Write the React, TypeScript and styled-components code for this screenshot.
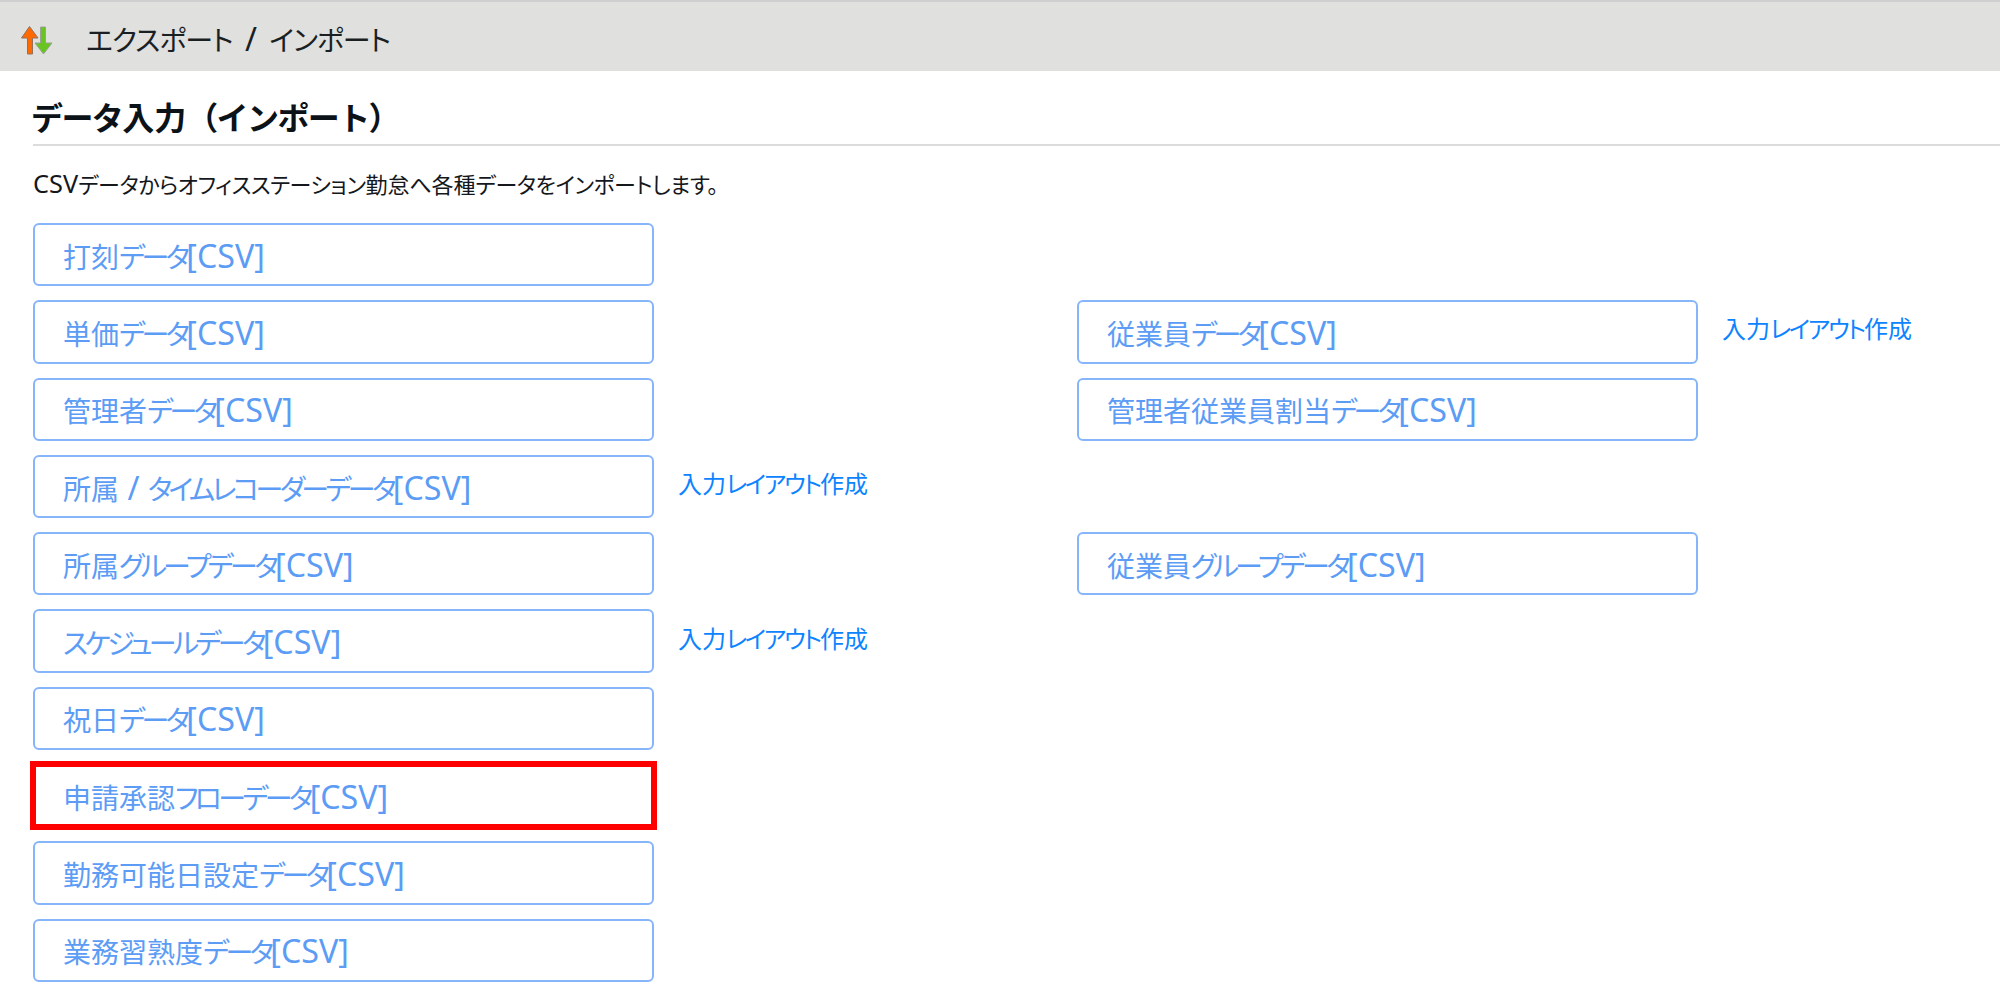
import React from 'react';
import styled, { createGlobalStyle } from 'styled-components';

const GlobalStyle = createGlobalStyle`
  html, body {
    margin: 0;
    padding: 0;
    background: #fff;
    font-family: "Noto Sans CJK JP", "Noto Sans", sans-serif;
    font-feature-settings: "palt";
  }
`;

const Page = styled.div`
  width: 2000px;
  height: 994px;
  overflow: hidden;
`;

const Header = styled.header`
  display: flex;
  align-items: center;
  height: 69px;
  padding-left: 21px;
  background: #e0e0de;
  border-top: 2px solid #cfcfcf;
`;

const HeaderIcon = styled.svg`
  flex: none;
  margin-top: 8px;
`;

const HeaderTitle = styled.h1`
  --kana-spacing: -0.035em;
  margin: 4px 0 0 33px;
  font-size: 28px;
  font-weight: 400;
  color: #1a1f24;
  word-spacing: 4px;
`;

const Content = styled.main`
  padding: 22px 0 0 33px;
`;

const SectionTitle = styled.h2`
  --kana-spacing: -0.05em;
  margin: 0;
  height: 51px;
  line-height: 46px;
  font-size: 32px;
  font-weight: 700;
  font-feature-settings: normal;
  text-indent: -2px;
  color: #0b1218;
  border-bottom: 2px solid #dcdcdc;
`;

const Lead = styled.p`
  --kana-spacing: -0.02em;
  margin: 21px 0 0;
  height: 33px;
  line-height: 33px;
  font-size: 22px;
  color: #14181c;
`;

const ImportGrid = styled.div`
  display: grid;
  grid-template-columns: 621px 423px 621px auto;
  grid-auto-rows: 63.3px;
  row-gap: 14px;
  margin-top: 23px;
`;

const ImportButton = styled.a<{ $column: 1 | 3; $row: number; $highlighted?: boolean }>`
  --kana-spacing: -0.13em;
  position: relative;
  grid-column: ${(p) => p.$column};
  grid-row: ${(p) => p.$row};
  display: flex;
  align-items: center;
  box-sizing: border-box;
  padding: 1px 0 0 28px;
  font-size: 28px;
  color: #5c9cf5;
  border: 2px solid #86b5f9;
  border-radius: 6px;
  white-space: pre;

  ${(p) =>
    p.$highlighted &&
    `
    &::after {
      content: "";
      position: absolute;
      inset: -5px;
      border: 6px solid #ff0000;
    }
  `}
`;

const LayoutLink = styled.a<{ $column: 2 | 4; $row: number }>`
  --kana-spacing: -0.09em;
  grid-column: ${(p) => p.$column};
  grid-row: ${(p) => p.$row};
  align-self: center;
  margin: 0 0 8px 24px;
  font-size: 24px;
  color: #0d84ff;
`;

// Kana in the original font is much narrower than the kanji
const Kana = styled.span`
  letter-spacing: var(--kana-spacing, -0.1em);
`;

const Latin = styled.span`
  font-family: "Noto Sans", sans-serif;
  font-size: 1.15em;
`;

const Mixed: React.FC<{ text: string }> = ({ text }) => (
  <>
    {text.split(/([\u3040-\u30ff\uff08\uff09。]+|[\x20-\x7e]+)/).map((part, i) => {
      if (!part) return null;
      if (/^[\x20-\x7e]/.test(part)) return <Latin key={i}>{part}</Latin>;
      if (/^[\u3040-\u30ff\uff08\uff09。]/.test(part)) return <Kana key={i}>{part}</Kana>;
      return <span key={i}>{part}</span>;
    })}
  </>
);

const ArrowsIcon = () => (
  <HeaderIcon width="32" height="29" viewBox="0 0 32 29" aria-hidden="true">
    <path d="M19.5 1h5v16H31l-8.5 11L14 17h5.5z" fill="#68c41e" stroke="#9aa394" strokeWidth="1" />
    <path d="M8.5 .5L17 12h-5.5v16h-5V12H.5z" fill="#ff6a00" stroke="#94705a" strokeWidth="1" />
  </HeaderIcon>
);

const buttons: { label: string; column: 1 | 3; row: number; highlighted?: boolean }[] = [
  { label: '打刻データ[CSV]', column: 1, row: 1 },
  { label: '単価データ[CSV]', column: 1, row: 2 },
  { label: '従業員データ[CSV]', column: 3, row: 2 },
  { label: '管理者データ[CSV]', column: 1, row: 3 },
  { label: '管理者従業員割当データ[CSV]', column: 3, row: 3 },
  { label: '所属 / タイムレコーダーデータ[CSV]', column: 1, row: 4 },
  { label: '所属グループデータ[CSV]', column: 1, row: 5 },
  { label: '従業員グループデータ[CSV]', column: 3, row: 5 },
  { label: 'スケジュールデータ[CSV]', column: 1, row: 6 },
  { label: '祝日データ[CSV]', column: 1, row: 7 },
  { label: '申請承認フローデータ[CSV]', column: 1, row: 8, highlighted: true },
  { label: '勤務可能日設定データ[CSV]', column: 1, row: 9 },
  { label: '業務習熟度データ[CSV]', column: 1, row: 10 },
];

const links: { column: 2 | 4; row: number }[] = [
  { column: 4, row: 2 },
  { column: 2, row: 4 },
  { column: 2, row: 6 },
];

const App: React.FC = () => {
  return (
    <Page>
      <GlobalStyle />
      <Header>
        <ArrowsIcon />
        <HeaderTitle>
          <Mixed text="エクスポート / インポート" />
        </HeaderTitle>
      </Header>
      <Content>
        <SectionTitle>
          <Mixed text="データ入力（インポート）" />
        </SectionTitle>
        <Lead>
          <Mixed text="CSVデータからオフィスステーション勤怠へ各種データをインポートします。" />
        </Lead>
        <ImportGrid>
          {buttons.map((b) => (
            <ImportButton key={b.label} $column={b.column} $row={b.row} $highlighted={b.highlighted}>
              <span>
                <Mixed text={b.label} />
              </span>
            </ImportButton>
          ))}
          {links.map((l) => (
            <LayoutLink key={`${l.column}-${l.row}`} $column={l.column} $row={l.row}>
              <Mixed text="入力レイアウト作成" />
            </LayoutLink>
          ))}
        </ImportGrid>
      </Content>
    </Page>
  );
};

export default App;
